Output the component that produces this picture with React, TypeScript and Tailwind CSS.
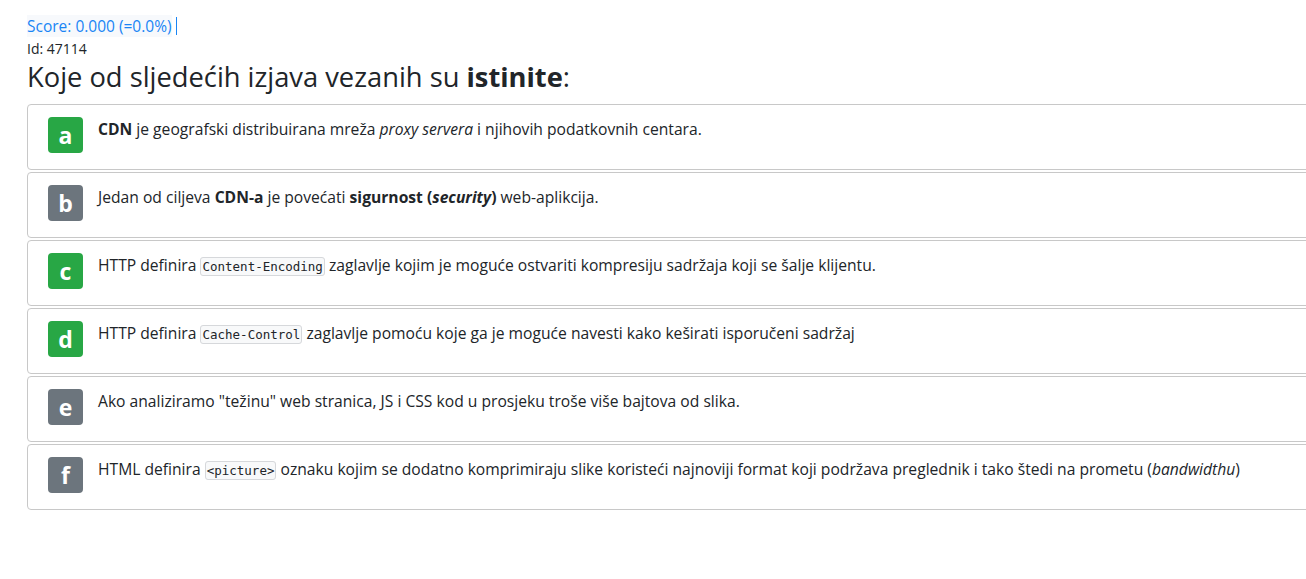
import React from 'react';

type Option = {
  letter: string;
  correct: boolean;
  body: React.ReactNode;
};

const Code: React.FC<{ children: React.ReactNode }> = ({ children }) => (
  <code className="font-['DejaVu_Sans_Mono',monospace] text-[12.5px] bg-[#f8f9fa] border border-[#d6d8db] rounded-[3px] px-[1px] py-[1px] text-[#212529]">
    {children}
  </code>
);

const OPTIONS: Option[] = [
  {
    letter: 'a',
    correct: true,
    body: (
      <>
        <b>CDN</b> je geografski distribuirana mreža <i>proxy servera</i> i njihovih podatkovnih centara.
      </>
    ),
  },
  {
    letter: 'b',
    correct: false,
    body: (
      <>
        Jedan od ciljeva <b>CDN-a</b> je povećati <b>sigurnost (<i>security</i>)</b> web-aplikcija.
      </>
    ),
  },
  {
    letter: 'c',
    correct: true,
    body: (
      <>
        HTTP definira <Code>Content-Encoding</Code> zaglavlje kojim je moguće ostvariti kompresiju sadržaja koji se šalje klijentu.
      </>
    ),
  },
  {
    letter: 'd',
    correct: true,
    body: (
      <>
        HTTP definira <Code>Cache-Control</Code> zaglavlje pomoću koje ga je moguće navesti kako keširati isporučeni sadržaj
      </>
    ),
  },
  {
    letter: 'e',
    correct: false,
    body: <>Ako analiziramo "težinu" web stranica, JS i CSS kod u prosjeku troše više bajtova od slika.</>,
  },
  {
    letter: 'f',
    correct: false,
    body: (
      <>
        HTML definira <Code>&lt;picture&gt;</Code> oznaku kojim se dodatno komprimiraju slike koristeći najnoviji format koji podržava preglednik i tako štedi na prometu (<i>bandwidthu</i>)
      </>
    ),
  },
];

const App: React.FC = () => {
  return (
    <div className="w-screen h-[579px] overflow-hidden bg-white text-[#212529] font-['Open_Sans',sans-serif]">
      <div className="pl-[27px] pt-[15px]">
        <div className="flex items-center">
          <span className="text-[15.5px] leading-[22px] text-[#1a85f5] bg-[#f7f9fc]">Score: 0.000 (=0.0%)</span>
          <span className="ml-[4px] w-[1px] h-[18px] bg-[#1a85f5]" />
        </div>
        <div className="text-[14px] leading-[20px] mt-[2px]">Id: 47114</div>
        <h1 className="text-[27.3px] leading-[36px] font-normal mb-[9px]">
          Koje od sljedećih izjava vezanih su <b>istinite</b>:
        </h1>

        <div className="flex flex-col gap-[2px] w-[1300px]">
          {OPTIONS.map(opt => (
            <div
              key={opt.letter}
              className="h-[66px] border border-[#c8c8c8] rounded-[4px] pt-[12px] pl-[20px] flex items-start gap-[15px]"
            >
              <div
                className={
                  'w-[35px] h-[36px] shrink-0 rounded-[4px] flex items-center justify-center text-white font-bold text-[23px] leading-none ' +
                  (opt.correct ? 'bg-[#28a745]' : 'bg-[#6c757d]')
                }
              >
                {opt.letter}
              </div>
              <p className="text-[15.65px] leading-[24px]">{opt.body}</p>
            </div>
          ))}
        </div>
      </div>
    </div>
  );
};

export default App;
